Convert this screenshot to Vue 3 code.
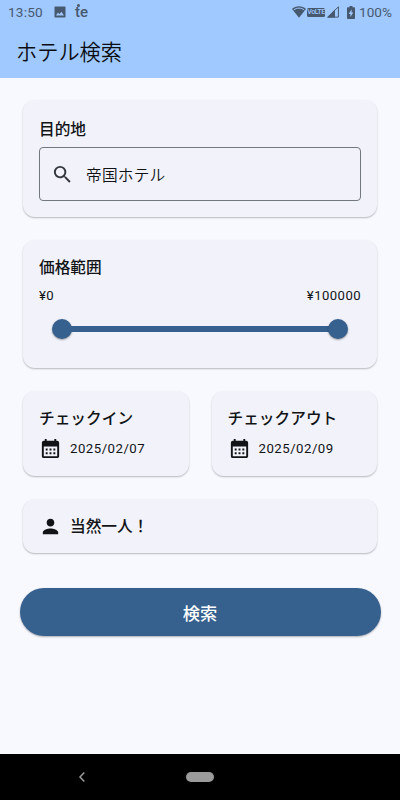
<script setup>
import { ref } from 'vue'

const destination = ref('帝国ホテル')
const priceRange = ref([0, 100000])
const stays = [
  { label: 'チェックイン', date: '2025/02/07' },
  { label: 'チェックアウト', date: '2025/02/09' },
]
</script>

<template>
  <div class="screen">
    <header class="top">
      <div class="status">
        <span class="clock">13:50</span>
        <svg class="photo" viewBox="0 0 12 12"><path fill-rule="evenodd" d="M1.3 0.5h9.4q.8 0 .8.8v9.4q0 .8-.8.8H1.3q-.8 0-.8-.8V1.3q0-.8.8-.8zM2 9.4h8L7.400 5.800 5.400 8.200 4 6.600z" /></svg>
        <span class="te">te<i></i></span>
        <span class="grow"></span>
        <svg class="wifi" viewBox="0 0 14 12"><path d="M7 .3C4.300.3 1.900 1.400 0 3L7 11.700 14 3C12.100 1.400 9.700.3 7 .3z" /><path d="M1.700 4C4.700 1.500 9.300 1.500 12.300 4" fill="none" stroke="#a0c9ff" stroke-width="1" /></svg>
        <span class="volte">VoLTE</span>
        <svg class="signal" viewBox="0 0 12 12"><path d="M0 11.500L8 3.500V11.500z" /><path d="M.8 11.100L11.400.8V11.100z" fill="none" stroke="#47596f" stroke-width="1" /></svg>
        <svg class="battery" viewBox="0 0 8 13"><path d="M2.500 0h3v1.300H7.200q.8 0 .8.8v10.100q0 .8-.8.8H.8q-.8 0-.8-.8V2.100q0-.8.8-.8h1.700z" /><path d="M4.600 3.200L1.700 7.900h1.700v3L6.300 6.400H4.600z" fill="#a0c9ff" /></svg>
        <span class="percent">100%</span>
      </div>
      <h1>ホテル検索</h1>
    </header>

    <main>
      <section class="card destination">
        <h2>目的地</h2>
        <div class="field">
          <svg class="icon" viewBox="0 0 24 24"><path d="M15.500 14h-.79l-.28-.27A6.471 6.471 0 0 0 16 9.500 6.500 6.500 0 1 0 9.500 16c1.610 0 3.090-.59 4.230-1.570l.27.28v.79l5 4.990L20.490 19l-4.990-5zm-6 0C7.010 14 5 11.990 5 9.500S7.010 5 9.500 5 14 7.010 14 9.500 11.990 14 9.500 14z" /></svg>
          <span>{{ destination }}</span>
        </div>
      </section>

      <section class="card price">
        <h2>価格範囲</h2>
        <div class="limits"><span>¥{{ priceRange[0] }}</span><span>¥{{ priceRange[1] }}</span></div>
        <div class="slider"><i class="thumb"></i><i class="track"></i><i class="thumb"></i></div>
      </section>

      <div class="stays">
        <section v-for="stay in stays" :key="stay.label" class="card stay">
          <h2>{{ stay.label }}</h2>
          <div class="date">
            <svg class="icon" viewBox="0 0 24 24"><path fill-rule="evenodd" d="M19 4h-1V2h-2v2H8V2H6v2H5c-1.110 0-1.990.9-1.990 2L3 20a2 2 0 0 0 2 2h14c1.100 0 2-.9 2-2V6c0-1.100-.9-2-2-2zm0 16H5V10h14v10zM9 14H7v-2h2v2zm4 0h-2v-2h2v2zm4 0h-2v-2h2v2zm-8 4H7v-2h2v2zm4 0h-2v-2h2v2zm4 0h-2v-2h2v2z" /></svg>
            <span>{{ stay.date }}</span>
          </div>
        </section>
      </div>

      <section class="card guests">
        <svg class="icon" viewBox="0 0 24 24"><path d="M12 12c2.210 0 4-1.790 4-4s-1.790-4-4-4-4 1.790-4 4 1.790 4 4 4zm0 2c-2.670 0-8 1.340-8 4v2h16v-2c0-2.660-5.330-4-8-4z" /></svg>
        <h2>当然一人！</h2>
      </section>

      <button class="search">検索</button>
    </main>

    <footer class="nav">
      <svg class="back" viewBox="0 0 8 12"><path d="M6.300 1.500L2 6l4.300 4.500" /></svg>
      <i class="home"></i>
    </footer>
  </div>
</template>

<style>
body { background: #f8f9ff; }
</style>

<style scoped>
* { box-sizing: border-box; }
.screen {
  width: 400px;
  height: 800px;
  display: flex;
  flex-direction: column;
  overflow: hidden;
  background: #f8f9ff;
  color: #111316;
  font-family: Roboto, "Noto Sans CJK JP", sans-serif;
}
svg { display: block; flex: none; fill: currentColor; }
.top { height: 77.500px; flex: none; background: #a0c9ff; }
.status {
  height: 24px;
  padding: 0 7px 0 8px;
  display: flex;
  align-items: center;
  color: #47596f;
  font-size: 13.600px;
}
.clock { width: 46px; letter-spacing: .2px; }
.photo { width: 12px; height: 12px; }
.te { position: relative; margin-left: 9px; font-size: 15px; font-weight: 500; line-height: 16px; letter-spacing: .1px; }
.te i { position: absolute; left: 2px; top: 0; width: 3px; height: 3px; border-radius: 50%; background: currentColor; }
.grow { flex: 1; }
.wifi { width: 14px; height: 12px; }
.volte {
  width: 18px;
  height: 9px;
  margin-left: 1px;
  border-radius: 1.500px;
  background: #47596f;
  color: #a0c9ff;
  font-size: 7px;
  font-weight: 500;
  line-height: 9.500px;
  text-align: center;
  letter-spacing: -.4px;
}
.signal { width: 12px; height: 12px; margin-left: 2px; }
.battery { width: 8px; height: 13px; margin-left: 8px; }
.percent { width: 34px; margin-left: 4px; letter-spacing: 0; }
h1 { margin: 12px 0 0 16px; font-size: 21.200px; line-height: 34px; font-weight: 350; color: #0b0d10; }
main { flex: 1; padding: 22.500px 23px 0; display: flex; flex-direction: column; gap: 23px; }
.card {
  padding: 16px;
  border-radius: 12px;
  background: #f2f3fa;
  box-shadow: 0 1px 2px rgba(0, 0, 0, .22), 0 1px 1px rgba(0, 0, 0, .06);
}
h2 { margin: 0; font-size: 15.700px; line-height: 24px; font-weight: 500; white-space: nowrap; }
.icon { width: 23px; height: 23px; }
.destination { height: 116.500px; padding-top: 17.500px; }
.field {
  height: 54px;
  margin-top: 5.500px;
  padding-left: 10.500px;
  display: flex;
  align-items: center;
  gap: 12.500px;
  border: 1px solid #73777f;
  border-radius: 4px;
  font-size: 15.700px;
  font-weight: 350;
  letter-spacing: .2px;
}
.field .icon { color: #33373d; }
.price { height: 128px; padding-top: 16.500px; }
.limits { margin-top: 7px; display: flex; justify-content: space-between; font-size: 13.100px; line-height: 18px; letter-spacing: .45px; }
.slider { margin: 13.500px 13px 0; height: 20px; display: flex; align-items: center; }
.thumb { width: 20px; height: 20px; border-radius: 50%; background: #36618e; box-shadow: 0 1px 2px rgba(0, 0, 0, .35); }
.track { flex: 1; height: 6px; margin: 0 -1px; background: #36618e; }
.stays { display: flex; gap: 23px; }
.stay { flex: 1; min-width: 0; height: 85px; }
.date { margin-top: 6px; display: flex; align-items: center; gap: 8px; font-size: 13.200px; letter-spacing: .5px; }
.guests { height: 54px; padding-bottom: 15px; display: flex; align-items: center; gap: 8px; }
.guests h2 { padding-top: 2px; }
.search {
  height: 48px;
  flex: none;
  margin: 12.500px -3.500px 0;
  padding: 4px 0 0;
  border: 0;
  border-radius: 24px;
  background: #36618e;
  box-shadow: 0 1px 2px rgba(0, 0, 0, .3);
  color: #fff;
  font: 500 17.300px/24px Roboto, "Noto Sans CJK JP", sans-serif;
}
.nav { height: 46.500px; flex: none; padding-left: 78px; display: flex; align-items: center; background: #000; color: #9b9b9b; }
.back { width: 8px; height: 12px; fill: none; stroke: currentColor; stroke-width: 1.500; }
.home { width: 28px; height: 10px; margin-left: 100px; border-radius: 5px; background: #9b9b9b; }
</style>
